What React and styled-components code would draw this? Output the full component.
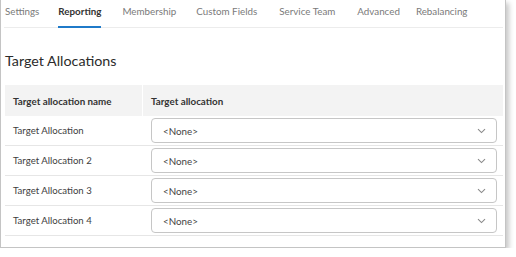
import React from "react";
import styled, { createGlobalStyle } from "styled-components";

const Global = createGlobalStyle`
  html, body { margin: 0; padding: 0; background: #ffffff; }
  body { font-family: Lato, "Open Sans", sans-serif; color: #333; }
  * { box-sizing: border-box; }
`;

const Frame = styled.div`
  width: 506px;
  height: 248px;
  border: 1px solid #c4c4c4;
  border-top: none;
  box-shadow: 3px 3px 5px rgba(0, 0, 0, 0.22);
  background: #fff;
  padding: 0 2px 0 3px;
`;

const Tabs = styled.div`
  display: flex;
  height: 28px;
  border-bottom: 1px solid #ececec;
  padding-left: 1px;
`;

const Tab = styled.div`
  position: relative;
  font-size: 9.8px;
  line-height: 13px;
  padding-top: 5px;
  margin-right: ${(p) => p.$gap}px;
  color: ${(p) => (p.$active ? "#333" : "#7a7a7a")};
  font-weight: ${(p) => (p.$active ? 700 : 400)};
  white-space: nowrap;
  &::after {
    content: "";
    display: ${(p) => (p.$active ? "block" : "none")};
    position: absolute;
    left: 0;
    right: 0;
    bottom: -1px;
    height: 2px;
    background: #1f7ac9;
  }
`;

const Heading = styled.h2`
  margin: 24px 0 15px 1px;
  font-size: 14.3px;
  line-height: 18px;
  font-weight: 400;
  color: #2b2b2b;
`;

const Table = styled.div`
  width: 498px;
  margin-left: 1px;
`;

const HeaderRow = styled.div`
  display: grid;
  grid-template-columns: 137px 1fr;
  height: 31px;
  background: #f3f3f3;
`;

const HeaderCell = styled.div`
  display: flex;
  align-items: center;
  padding-left: ${(p) => p.$pad}px;
  font-size: 9.8px;
  font-weight: 700;
  color: #333;
  border-left: ${(p) => (p.$divider ? "1px solid #fff" : "none")};
`;

const Row = styled.div`
  display: grid;
  grid-template-columns: 137px 1fr;
  height: 30px;
  border-bottom: 1px solid #e6e6e6;
  align-items: center;
`;

const NameCell = styled.div`
  padding-left: 8px;
  font-size: 9.6px;
  color: #3e3e3e;
`;

const SelectCell = styled.div`
  padding: 0 6px 0 9px;
`;

const Select = styled.div`
  display: flex;
  align-items: center;
  justify-content: space-between;
  height: 25px;
  border: 1px solid #c6c6c6;
  border-radius: 4px;
  padding: 0 10px 0 11px;
  font-size: 9.8px;
  color: #444;
`;

const Chevron = () => (
  <svg width="9" height="6" viewBox="0 0 9 6" fill="none">
    <path d="M1 1.2 L4.5 4.6 L8 1.2" stroke="#8a8a8a" strokeWidth="1.1" />
  </svg>
);

const tabs = [
  ["Settings", 19],
  ["Reporting", 21],
  ["Membership", 20],
  ["Custom Fields", 22],
  ["Service Team", 22],
  ["Advanced", 16],
  ["Rebalancing", 0],
];

const rows = ["Target Allocation", "Target Allocation 2", "Target Allocation 3", "Target Allocation 4"];

export default function App() {
  return (
    <>
      <Global />
      <Frame>
        <Tabs>
          {tabs.map(([t, g]) => (
            <Tab key={t} $active={t === "Reporting"} $gap={g}>
              {t}
            </Tab>
          ))}
        </Tabs>
        <Heading>Target Allocations</Heading>
        <Table>
          <HeaderRow>
            <HeaderCell $pad={8}>Target allocation name</HeaderCell>
            <HeaderCell $pad={8} $divider>Target allocation</HeaderCell>
          </HeaderRow>
          {rows.map((r) => (
            <Row key={r}>
              <NameCell>{r}</NameCell>
              <SelectCell>
                <Select>
                  <span>&lt;None&gt;</span>
                  <Chevron />
                </Select>
              </SelectCell>
            </Row>
          ))}
        </Table>
      </Frame>
    </>
  );
}
